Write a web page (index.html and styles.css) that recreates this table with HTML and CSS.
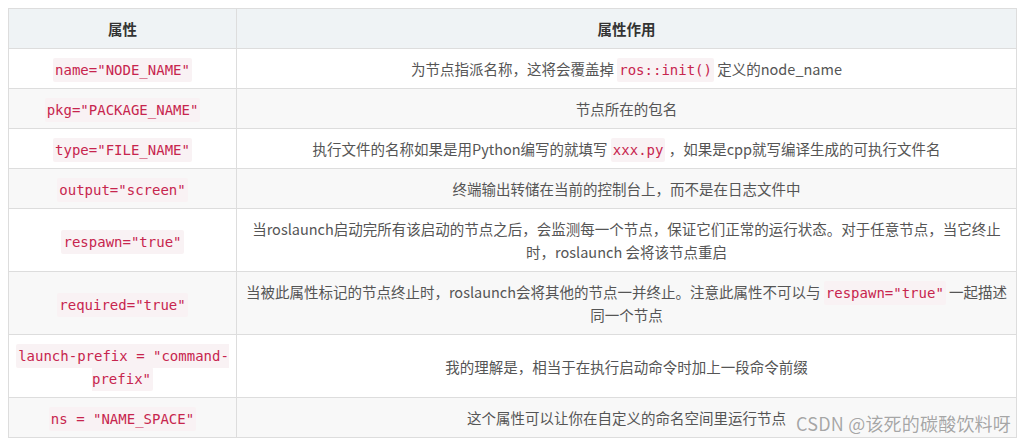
FILE: index.html
```html
<!DOCTYPE html>
<html lang="zh">
<head>
<meta charset="utf-8">
<link rel="stylesheet" href="styles.css">
</head>
<body>
<div class="wrap">
<table class="attr-table">
  <thead>
    <tr><th class="c1">属性</th><th class="c2">属性作用</th></tr>
  </thead>
  <tbody>
    <tr><td><code>name="NODE_NAME"</code></td><td>为节点指派名称，这将会覆盖掉 <code>ros::init()</code> 定义的node_name</td></tr>
    <tr><td><code>pkg="PACKAGE_NAME"</code></td><td>节点所在的包名</td></tr>
    <tr><td><code>type="FILE_NAME"</code></td><td>执行文件的名称如果是用Python编写的就填写 <code>xxx.py</code> ，如果是cpp就写编译生成的可执行文件名</td></tr>
    <tr><td><code>output="screen"</code></td><td>终端输出转储在当前的控制台上，而不是在日志文件中</td></tr>
    <tr><td><code>respawn="true"</code></td><td>当roslaunch启动完所有该启动的节点之后，会监测每一个节点，保证它们正常的运行状态。对于任意节点，当它终止时，roslaunch 会将该节点重启</td></tr>
    <tr><td><code>required="true"</code></td><td>当被此属性标记的节点终止时，roslaunch会将其他的节点一并终止。注意此属性不可以与 <code>respawn="true"</code> 一起描述同一个节点</td></tr>
    <tr><td><code>launch-prefix = "command-prefix"</code></td><td>我的理解是，相当于在执行启动命令时加上一段命令前缀</td></tr>
    <tr><td><code>ns = "NAME_SPACE"</code></td><td>这个属性可以让你在自定义的命名空间里运行节点</td></tr>
  </tbody>
</table>
<div class="watermark">CSDN @该死的碳酸饮料呀</div>
</div>
</body>
</html>
```

FILE: styles.css
```css
html, body {
  margin: 0;
  padding: 0;
  background: #ffffff;
}
body {
  padding: 8px;
  font-family: "Noto Sans CJK SC", "Noto Sans", sans-serif;
  font-size: 14.5px;
  color: #555555;
}
.wrap {
  position: relative;
  width: 1009px;
}
.attr-table {
  width: 1009px;
  border-collapse: collapse;
  table-layout: fixed;
}
.attr-table th,
.attr-table td {
  border: 1px solid #dddddd;
  height: 23px;
  padding: 8px 8px;
  line-height: 23px;
  text-align: center;
  vertical-align: middle;
}
.attr-table th {
  background: #eff3f5;
  color: #333333;
  font-weight: bold;
}
.attr-table .c1 {
  width: 211px;
}
.attr-table tbody tr:nth-child(even) td {
  background: #f8f8f8;
}
.attr-table tbody tr:nth-child(odd) td {
  background: #ffffff;
}
.attr-table td:first-child {
  padding: 8px 6px;
}
code {
  font-family: "DejaVu Sans Mono", "Liberation Mono", monospace;
  font-size: 14px;
  line-height: 1;
  color: #c7254e;
  background: #f9f2f4;
  padding: 4px 2px;
  border-radius: 2px;
}
.watermark {
  position: absolute;
  right: 6px;
  bottom: 3px;
  font-size: 18px;
  line-height: 24px;
  color: rgba(150, 150, 150, 0.85);
  text-shadow: 0 0 1px #ffffff;
  letter-spacing: 0.2px;
}
```
